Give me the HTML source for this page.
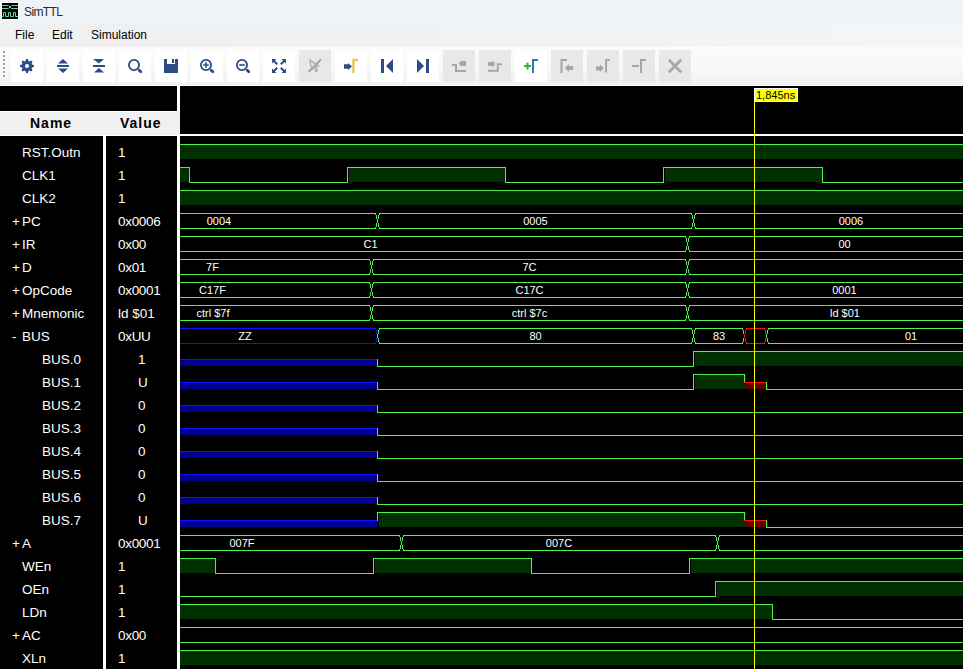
<!DOCTYPE html>
<html><head><meta charset="utf-8"><style>
*{margin:0;padding:0;box-sizing:border-box}
html,body{width:963px;height:669px;overflow:hidden;background:#000;font-family:"Liberation Sans",sans-serif}
.abs{position:absolute}
#title{position:absolute;left:0;top:0;width:963px;height:23px;background:#eef3f8}
#menu{position:absolute;left:0;top:23px;width:963px;height:24px;background:linear-gradient(to right,#f0f0f0 0%,#f0f0f0 20%,#f5f5f5 100%)}
#menu span{position:absolute;top:5px;font-size:12px;color:#000;line-height:14px}
#tool{position:absolute;left:0;top:47px;width:963px;height:39px;border-bottom:1px solid #fff;background:linear-gradient(to bottom,#fbfbfb 0%,#f8f8f8 55%,#f0f0f0 100%)}
.btn{position:absolute;top:50px;width:32px;height:32px}
.btn svg{display:block}
#left{position:absolute;left:0;top:86px;width:177px;height:583px;background:#000}
#hdr{position:absolute;left:0;top:111px;width:180px;height:25px;background:#f0f0f0;border-top:1px solid #fff;border-bottom:1px solid #fff}
.hd{position:absolute;top:0;font-size:14px;font-weight:bold;color:#000;line-height:23px;letter-spacing:1px}
.t{position:absolute;font-size:13.5px;color:#fff;line-height:23px;white-space:pre}
#wave{position:absolute;left:0;top:0}
#wave text{font-family:"Liberation Sans",sans-serif;font-size:11px;fill:#fff}
</style></head><body>
<div id="title">
<svg class="abs" style="left:1px;top:2px" width="18" height="18" viewBox="0 0 18 18">
<rect x="0" y="0" width="18" height="18" fill="#fff"/>
<rect x="1" y="1" width="16" height="16" fill="#000"/>
<path d="M1 3.5H7.5L9 5L10.5 3.5H17M1 6.5H7.5L9 5L10.5 6.5H17" stroke="#5fd69c" stroke-width="1" fill="none"/>
<path d="M1 14.5H2.5V10.5H4.5V14.5H7.5V10.5H9.5V14.5H12.5V10.5H14.5V14.5H17" stroke="#5fd69c" stroke-width="1" fill="none"/>
</svg>
<div class="abs" style="left:24px;top:5px;font-size:12px;line-height:14px;color:#2b2b2b;letter-spacing:-0.6px">SimTTL</div>
</div>
<div id="menu"><span style="left:15px">File</span><span style="left:52px">Edit</span><span style="left:91px">Simulation</span></div>
<div id="tool">
</div>
<div style="position:absolute;left:4px;top:52px;width:2px;height:2px;background:#ffffff"></div><div style="position:absolute;left:3px;top:51px;width:2px;height:2px;background:#a0a0a0"></div><div style="position:absolute;left:4px;top:56px;width:2px;height:2px;background:#ffffff"></div><div style="position:absolute;left:3px;top:55px;width:2px;height:2px;background:#a0a0a0"></div><div style="position:absolute;left:4px;top:60px;width:2px;height:2px;background:#ffffff"></div><div style="position:absolute;left:3px;top:59px;width:2px;height:2px;background:#a0a0a0"></div><div style="position:absolute;left:4px;top:64px;width:2px;height:2px;background:#ffffff"></div><div style="position:absolute;left:3px;top:63px;width:2px;height:2px;background:#a0a0a0"></div><div style="position:absolute;left:4px;top:68px;width:2px;height:2px;background:#ffffff"></div><div style="position:absolute;left:3px;top:67px;width:2px;height:2px;background:#a0a0a0"></div><div style="position:absolute;left:4px;top:72px;width:2px;height:2px;background:#ffffff"></div><div style="position:absolute;left:3px;top:71px;width:2px;height:2px;background:#a0a0a0"></div><div style="position:absolute;left:4px;top:76px;width:2px;height:2px;background:#ffffff"></div><div style="position:absolute;left:3px;top:75px;width:2px;height:2px;background:#a0a0a0"></div>
<div class="btn" style="left:11px;background:#ffffff"><svg width="32" height="32" viewBox="0 0 32 32"><path d="M20.96 14.45L22.94 15.10L22.94 16.90L20.96 17.55L20.61 18.42L21.55 20.27L20.27 21.55L18.42 20.61L17.55 20.96L16.90 22.94L15.10 22.94L14.45 20.96L13.58 20.61L11.73 21.55L10.45 20.27L11.39 18.42L11.04 17.55L9.06 16.90L9.06 15.10L11.04 14.45L11.39 13.58L10.45 11.73L11.73 10.45L13.58 11.39L14.45 11.04L15.10 9.06L16.90 9.06L17.55 11.04L18.42 11.39L20.27 10.45L21.55 11.73L20.61 13.58ZM18.1 16A2.1 2.1 0 1 0 13.9 16A2.1 2.1 0 1 0 18.1 16Z" fill="#2c4b87" fill-rule="evenodd"/></svg></div><div class="btn" style="left:47px;background:#ffffff"><svg width="32" height="32" viewBox="0 0 32 32"><path d="M11 13.5L16 9L21 13.5Z M11 18.5L21 18.5L16 23Z" fill="#2c4b87"/><rect x="10" y="15" width="12" height="2" fill="#2c4b87"/></svg></div><div class="btn" style="left:83px;background:#ffffff"><svg width="32" height="32" viewBox="0 0 32 32"><path d="M10 9L21 9L16 13.5Z M11 22.5L16 18L21 22.5Z" fill="#2c4b87"/><rect x="10" y="15" width="12" height="2" fill="#2c4b87"/></svg></div><div class="btn" style="left:119px;background:#ffffff"><svg width="32" height="32" viewBox="0 0 32 32"><circle cx="15" cy="15" r="5.1" stroke="#2c4b87" stroke-width="1.8" fill="none"/><path d="M20.2 20.2L21.8 21.8" stroke="#2c4b87" stroke-width="2.8" stroke-linecap="round"/></svg></div><div class="btn" style="left:155px;background:#ffffff"><svg width="32" height="32" viewBox="0 0 32 32"><path d="M9 9H12V14H20V9H23V23H9Z" fill="#2c4b87"/><rect x="17" y="9" width="2" height="4" fill="#2c4b87"/></svg></div><div class="btn" style="left:191px;background:#ffffff"><svg width="32" height="32" viewBox="0 0 32 32"><circle cx="15" cy="15" r="5.1" stroke="#2c4b87" stroke-width="1.8" fill="none"/><path d="M20.2 20.2L21.8 21.8" stroke="#2c4b87" stroke-width="2.8" stroke-linecap="round"/><path d="M12.2 15H17.8M15 12.2V17.8" stroke="#2c4b87" stroke-width="1.6"/></svg></div><div class="btn" style="left:227px;background:#ffffff"><svg width="32" height="32" viewBox="0 0 32 32"><circle cx="15" cy="15" r="5.1" stroke="#2c4b87" stroke-width="1.8" fill="none"/><path d="M20.2 20.2L21.8 21.8" stroke="#2c4b87" stroke-width="2.8" stroke-linecap="round"/><path d="M12.2 15H17.8" stroke="#2c4b87" stroke-width="1.6"/></svg></div><div class="btn" style="left:263px;background:#ffffff"><svg width="32" height="32" viewBox="0 0 32 32"><path d="M9 9H13.5L9 13.5Z M23 9H18.5L23 13.5Z M9 23H13.5L9 18.5Z M23 23H18.5L23 18.5Z" fill="#2c4b87"/><path d="M10.5 10.5L14.2 14.2M21.5 10.5L17.8 14.2M10.5 21.5L14.2 17.8M21.5 21.5L17.8 17.8" stroke="#2c4b87" stroke-width="2"/></svg></div><div class="btn" style="left:299px;background:#e8e8e8"><svg width="32" height="32" viewBox="0 0 32 32"><path d="M11 10L19.5 16L16.5 16.5L18.5 20.5L17 21.5L15 17.5L12.5 19.5Z" stroke="#a6a6a6" stroke-width="1.2" fill="none"/><path d="M9.5 22L22 9.5" stroke="#a6a6a6" stroke-width="2.2"/></svg></div><div class="btn" style="left:335px;background:#ffffff"><svg width="32" height="32" viewBox="0 0 32 32"><path d="M9 14.2H13V13L17 16.5L13 20V18.8H9Z" fill="#2c4b87"/><path d="M18.4 23V10H23" stroke="#e2c95e" stroke-width="2.4" fill="none"/></svg></div><div class="btn" style="left:371px;background:#ffffff"><svg width="32" height="32" viewBox="0 0 32 32"><rect x="10" y="9" width="3" height="14" fill="#2c4b87"/><path d="M22 9V23L15 16Z" fill="#2c4b87"/></svg></div><div class="btn" style="left:407px;background:#ffffff"><svg width="32" height="32" viewBox="0 0 32 32"><rect x="19" y="9" width="3" height="14" fill="#2c4b87"/><path d="M10 9V23L17 16Z" fill="#2c4b87"/></svg></div><div class="btn" style="left:443px;background:#e8e8e8"><svg width="32" height="32" viewBox="0 0 32 32"><path d="M9 15H13V21H23" stroke="#a6a6a6" stroke-width="2" fill="none"/><path d="M23 11H19V10L15.5 13.5L19 17V16H23Z" fill="#a6a6a6"/></svg></div><div class="btn" style="left:479px;background:#e8e8e8"><svg width="32" height="32" viewBox="0 0 32 32"><path d="M9 20.8H18.8V14.2H23" stroke="#a6a6a6" stroke-width="2" fill="none"/><path d="M9 12H13V10.2L16.5 14L13 17.8V16H9Z" fill="#a6a6a6"/></svg></div><div class="btn" style="left:515px;background:#ffffff"><svg width="32" height="32" viewBox="0 0 32 32"><path d="M9 16H16M12.5 12.5V19.5" stroke="#3aae3a" stroke-width="2"/><path d="M18 23V10H23" stroke="#3374b6" stroke-width="2" fill="none"/></svg></div><div class="btn" style="left:551px;background:#e8e8e8"><svg width="32" height="32" viewBox="0 0 32 32"><path d="M10.5 23V10H16" stroke="#a6a6a6" stroke-width="2" fill="none"/><path d="M22.2 16H18V14L14 18L18 22V20H22.2Z" fill="#a6a6a6"/></svg></div><div class="btn" style="left:587px;background:#e8e8e8"><svg width="32" height="32" viewBox="0 0 32 32"><path d="M19 22.5V10H23" stroke="#a6a6a6" stroke-width="2" fill="none"/><path d="M9 16.2H13V14.5L16.8 18.3L13 22V20.6H9Z" fill="#a6a6a6"/></svg></div><div class="btn" style="left:623px;background:#e8e8e8"><svg width="32" height="32" viewBox="0 0 32 32"><path d="M18 23V10H23" stroke="#a6a6a6" stroke-width="2" fill="none"/><path d="M9 16H16" stroke="#a6a6a6" stroke-width="2"/></svg></div><div class="btn" style="left:659px;background:#e8e8e8"><svg width="32" height="32" viewBox="0 0 32 32"><path d="M9.8 9.8L22.2 22.2M22.2 9.8L9.8 22.2" stroke="#a6a6a6" stroke-width="2.8"/></svg></div>
<div id="left"></div>
<div class="abs" style="left:177px;top:86px;width:3px;height:583px;background:#fff"></div>
<div id="hdr"><div class="hd" style="left:30px">Name</div><div class="hd" style="left:120px">Value</div></div>
<div class="abs" style="left:103px;top:136px;width:3px;height:533px;background:#fff"></div>
<div class="t" style="left:22px;top:141px">RST.Outn</div><div class="t" style="left:118px;top:141px">1</div><div class="t" style="left:22px;top:164px">CLK1</div><div class="t" style="left:118px;top:164px">1</div><div class="t" style="left:22px;top:187px">CLK2</div><div class="t" style="left:118px;top:187px">1</div><div class="t" style="left:12px;top:210px">+</div><div class="t" style="left:22px;top:210px">PC</div><div class="t" style="left:118px;top:210px;letter-spacing:-0.3px">0x0006</div><div class="t" style="left:12px;top:233px">+</div><div class="t" style="left:22px;top:233px">IR</div><div class="t" style="left:118px;top:233px;letter-spacing:-0.3px">0x00</div><div class="t" style="left:12px;top:256px">+</div><div class="t" style="left:22px;top:256px">D</div><div class="t" style="left:118px;top:256px;letter-spacing:-0.3px">0x01</div><div class="t" style="left:12px;top:279px">+</div><div class="t" style="left:22px;top:279px">OpCode</div><div class="t" style="left:118px;top:279px;letter-spacing:-0.3px">0x0001</div><div class="t" style="left:12px;top:302px">+</div><div class="t" style="left:22px;top:302px">Mnemonic</div><div class="t" style="left:118px;top:302px">ld $01</div><div class="t" style="left:12px;top:325px">-</div><div class="t" style="left:22px;top:325px">BUS</div><div class="t" style="left:118px;top:325px;letter-spacing:-0.3px">0xUU</div><div class="t" style="left:42px;top:348px">BUS.0</div><div class="t" style="left:138px;top:348px">1</div><div class="t" style="left:42px;top:371px">BUS.1</div><div class="t" style="left:138px;top:371px">U</div><div class="t" style="left:42px;top:394px">BUS.2</div><div class="t" style="left:138px;top:394px">0</div><div class="t" style="left:42px;top:417px">BUS.3</div><div class="t" style="left:138px;top:417px">0</div><div class="t" style="left:42px;top:440px">BUS.4</div><div class="t" style="left:138px;top:440px">0</div><div class="t" style="left:42px;top:463px">BUS.5</div><div class="t" style="left:138px;top:463px">0</div><div class="t" style="left:42px;top:486px">BUS.6</div><div class="t" style="left:138px;top:486px">0</div><div class="t" style="left:42px;top:509px">BUS.7</div><div class="t" style="left:138px;top:509px">U</div><div class="t" style="left:12px;top:532px">+</div><div class="t" style="left:22px;top:532px">A</div><div class="t" style="left:118px;top:532px;letter-spacing:-0.3px">0x0001</div><div class="t" style="left:22px;top:555px">WEn</div><div class="t" style="left:118px;top:555px">1</div><div class="t" style="left:22px;top:578px">OEn</div><div class="t" style="left:118px;top:578px">1</div><div class="t" style="left:22px;top:601px">LDn</div><div class="t" style="left:118px;top:601px">1</div><div class="t" style="left:12px;top:624px">+</div><div class="t" style="left:22px;top:624px">AC</div><div class="t" style="left:118px;top:624px;letter-spacing:-0.3px">0x00</div><div class="t" style="left:22px;top:647px">XLn</div><div class="t" style="left:118px;top:647px">1</div>
<svg id="wave" width="963" height="669" viewBox="0 0 963 669" style="position:absolute;left:0;top:0">
<defs><clipPath id="cp"><rect x="180" y="86" width="783" height="583"/></clipPath></defs>
<g clip-path="url(#cp)" shape-rendering="crispEdges">
<rect x="180" y="134" width="783" height="2" fill="#fff"/>
<rect x="180" y="145" width="784" height="14" fill="#003000"/><rect x="180" y="144" width="784" height="1" fill="#50f050"/><rect x="180" y="168" width="9" height="14" fill="#003000"/><rect x="349" y="168" width="156" height="14" fill="#003000"/><rect x="665" y="168" width="157" height="14" fill="#003000"/><rect x="180" y="167" width="10" height="1" fill="#50f050"/><rect x="189" y="167" width="1" height="16" fill="#50f050"/><rect x="189" y="182" width="159" height="1" fill="#50f050"/><rect x="347" y="167" width="1" height="16" fill="#50f050"/><rect x="347" y="167" width="159" height="1" fill="#50f050"/><rect x="505" y="167" width="1" height="16" fill="#50f050"/><rect x="505" y="182" width="159" height="1" fill="#50f050"/><rect x="663" y="167" width="1" height="16" fill="#50f050"/><rect x="663" y="167" width="160" height="1" fill="#50f050"/><rect x="822" y="167" width="1" height="16" fill="#50f050"/><rect x="822" y="182" width="142" height="1" fill="#50f050"/><rect x="180" y="191" width="784" height="14" fill="#003000"/><rect x="180" y="190" width="784" height="1" fill="#50f050"/><rect x="180" y="213" width="196" height="1" fill="#50f050"/><rect x="180" y="228" width="196" height="1" fill="#50f050"/><rect x="375" y="213" width="1" height="1" fill="#50f050"/><rect x="375" y="214" width="1" height="1" fill="#50f050"/><rect x="376" y="215" width="1" height="1" fill="#50f050"/><rect x="376" y="216" width="1" height="1" fill="#50f050"/><rect x="376" y="217" width="1" height="1" fill="#50f050"/><rect x="376" y="218" width="1" height="1" fill="#50f050"/><rect x="377" y="219" width="1" height="1" fill="#50f050"/><rect x="377" y="220" width="1" height="1" fill="#50f050"/><rect x="377" y="221" width="1" height="1" fill="#50f050"/><rect x="377" y="222" width="1" height="1" fill="#50f050"/><rect x="376" y="223" width="1" height="1" fill="#50f050"/><rect x="376" y="224" width="1" height="1" fill="#50f050"/><rect x="376" y="225" width="1" height="1" fill="#50f050"/><rect x="376" y="226" width="1" height="1" fill="#50f050"/><rect x="375" y="227" width="1" height="1" fill="#50f050"/><rect x="375" y="228" width="1" height="1" fill="#50f050"/><rect x="379" y="213" width="313" height="1" fill="#50f050"/><rect x="379" y="228" width="313" height="1" fill="#50f050"/><rect x="691" y="213" width="1" height="1" fill="#50f050"/><rect x="691" y="214" width="1" height="1" fill="#50f050"/><rect x="692" y="215" width="1" height="1" fill="#50f050"/><rect x="692" y="216" width="1" height="1" fill="#50f050"/><rect x="692" y="217" width="1" height="1" fill="#50f050"/><rect x="692" y="218" width="1" height="1" fill="#50f050"/><rect x="693" y="219" width="1" height="1" fill="#50f050"/><rect x="693" y="220" width="1" height="1" fill="#50f050"/><rect x="693" y="221" width="1" height="1" fill="#50f050"/><rect x="693" y="222" width="1" height="1" fill="#50f050"/><rect x="692" y="223" width="1" height="1" fill="#50f050"/><rect x="692" y="224" width="1" height="1" fill="#50f050"/><rect x="692" y="225" width="1" height="1" fill="#50f050"/><rect x="692" y="226" width="1" height="1" fill="#50f050"/><rect x="691" y="227" width="1" height="1" fill="#50f050"/><rect x="691" y="228" width="1" height="1" fill="#50f050"/><rect x="379" y="213" width="1" height="1" fill="#50f050"/><rect x="379" y="214" width="1" height="1" fill="#50f050"/><rect x="378" y="215" width="1" height="1" fill="#50f050"/><rect x="378" y="216" width="1" height="1" fill="#50f050"/><rect x="378" y="217" width="1" height="1" fill="#50f050"/><rect x="378" y="218" width="1" height="1" fill="#50f050"/><rect x="377" y="219" width="1" height="1" fill="#50f050"/><rect x="377" y="220" width="1" height="1" fill="#50f050"/><rect x="377" y="221" width="1" height="1" fill="#50f050"/><rect x="377" y="222" width="1" height="1" fill="#50f050"/><rect x="378" y="223" width="1" height="1" fill="#50f050"/><rect x="378" y="224" width="1" height="1" fill="#50f050"/><rect x="378" y="225" width="1" height="1" fill="#50f050"/><rect x="378" y="226" width="1" height="1" fill="#50f050"/><rect x="379" y="227" width="1" height="1" fill="#50f050"/><rect x="379" y="228" width="1" height="1" fill="#50f050"/><rect x="695" y="213" width="269" height="1" fill="#50f050"/><rect x="695" y="228" width="269" height="1" fill="#50f050"/><rect x="695" y="213" width="1" height="1" fill="#50f050"/><rect x="695" y="214" width="1" height="1" fill="#50f050"/><rect x="694" y="215" width="1" height="1" fill="#50f050"/><rect x="694" y="216" width="1" height="1" fill="#50f050"/><rect x="694" y="217" width="1" height="1" fill="#50f050"/><rect x="694" y="218" width="1" height="1" fill="#50f050"/><rect x="693" y="219" width="1" height="1" fill="#50f050"/><rect x="693" y="220" width="1" height="1" fill="#50f050"/><rect x="693" y="221" width="1" height="1" fill="#50f050"/><rect x="693" y="222" width="1" height="1" fill="#50f050"/><rect x="694" y="223" width="1" height="1" fill="#50f050"/><rect x="694" y="224" width="1" height="1" fill="#50f050"/><rect x="694" y="225" width="1" height="1" fill="#50f050"/><rect x="694" y="226" width="1" height="1" fill="#50f050"/><rect x="695" y="227" width="1" height="1" fill="#50f050"/><rect x="695" y="228" width="1" height="1" fill="#50f050"/><rect x="180" y="236" width="506" height="1" fill="#50f050"/><rect x="180" y="251" width="506" height="1" fill="#50f050"/><rect x="685" y="236" width="1" height="1" fill="#50f050"/><rect x="685" y="237" width="1" height="1" fill="#50f050"/><rect x="686" y="238" width="1" height="1" fill="#50f050"/><rect x="686" y="239" width="1" height="1" fill="#50f050"/><rect x="686" y="240" width="1" height="1" fill="#50f050"/><rect x="686" y="241" width="1" height="1" fill="#50f050"/><rect x="687" y="242" width="1" height="1" fill="#50f050"/><rect x="687" y="243" width="1" height="1" fill="#50f050"/><rect x="687" y="244" width="1" height="1" fill="#50f050"/><rect x="687" y="245" width="1" height="1" fill="#50f050"/><rect x="686" y="246" width="1" height="1" fill="#50f050"/><rect x="686" y="247" width="1" height="1" fill="#50f050"/><rect x="686" y="248" width="1" height="1" fill="#50f050"/><rect x="686" y="249" width="1" height="1" fill="#50f050"/><rect x="685" y="250" width="1" height="1" fill="#50f050"/><rect x="685" y="251" width="1" height="1" fill="#50f050"/><rect x="689" y="236" width="275" height="1" fill="#50f050"/><rect x="689" y="251" width="275" height="1" fill="#50f050"/><rect x="689" y="236" width="1" height="1" fill="#50f050"/><rect x="689" y="237" width="1" height="1" fill="#50f050"/><rect x="688" y="238" width="1" height="1" fill="#50f050"/><rect x="688" y="239" width="1" height="1" fill="#50f050"/><rect x="688" y="240" width="1" height="1" fill="#50f050"/><rect x="688" y="241" width="1" height="1" fill="#50f050"/><rect x="687" y="242" width="1" height="1" fill="#50f050"/><rect x="687" y="243" width="1" height="1" fill="#50f050"/><rect x="687" y="244" width="1" height="1" fill="#50f050"/><rect x="687" y="245" width="1" height="1" fill="#50f050"/><rect x="688" y="246" width="1" height="1" fill="#50f050"/><rect x="688" y="247" width="1" height="1" fill="#50f050"/><rect x="688" y="248" width="1" height="1" fill="#50f050"/><rect x="688" y="249" width="1" height="1" fill="#50f050"/><rect x="689" y="250" width="1" height="1" fill="#50f050"/><rect x="689" y="251" width="1" height="1" fill="#50f050"/><rect x="180" y="259" width="190" height="1" fill="#50f050"/><rect x="180" y="274" width="190" height="1" fill="#50f050"/><rect x="369" y="259" width="1" height="1" fill="#50f050"/><rect x="369" y="260" width="1" height="1" fill="#50f050"/><rect x="370" y="261" width="1" height="1" fill="#50f050"/><rect x="370" y="262" width="1" height="1" fill="#50f050"/><rect x="370" y="263" width="1" height="1" fill="#50f050"/><rect x="370" y="264" width="1" height="1" fill="#50f050"/><rect x="371" y="265" width="1" height="1" fill="#50f050"/><rect x="371" y="266" width="1" height="1" fill="#50f050"/><rect x="371" y="267" width="1" height="1" fill="#50f050"/><rect x="371" y="268" width="1" height="1" fill="#50f050"/><rect x="370" y="269" width="1" height="1" fill="#50f050"/><rect x="370" y="270" width="1" height="1" fill="#50f050"/><rect x="370" y="271" width="1" height="1" fill="#50f050"/><rect x="370" y="272" width="1" height="1" fill="#50f050"/><rect x="369" y="273" width="1" height="1" fill="#50f050"/><rect x="369" y="274" width="1" height="1" fill="#50f050"/><rect x="373" y="259" width="313" height="1" fill="#50f050"/><rect x="373" y="274" width="313" height="1" fill="#50f050"/><rect x="685" y="259" width="1" height="1" fill="#50f050"/><rect x="685" y="260" width="1" height="1" fill="#50f050"/><rect x="686" y="261" width="1" height="1" fill="#50f050"/><rect x="686" y="262" width="1" height="1" fill="#50f050"/><rect x="686" y="263" width="1" height="1" fill="#50f050"/><rect x="686" y="264" width="1" height="1" fill="#50f050"/><rect x="687" y="265" width="1" height="1" fill="#50f050"/><rect x="687" y="266" width="1" height="1" fill="#50f050"/><rect x="687" y="267" width="1" height="1" fill="#50f050"/><rect x="687" y="268" width="1" height="1" fill="#50f050"/><rect x="686" y="269" width="1" height="1" fill="#50f050"/><rect x="686" y="270" width="1" height="1" fill="#50f050"/><rect x="686" y="271" width="1" height="1" fill="#50f050"/><rect x="686" y="272" width="1" height="1" fill="#50f050"/><rect x="685" y="273" width="1" height="1" fill="#50f050"/><rect x="685" y="274" width="1" height="1" fill="#50f050"/><rect x="373" y="259" width="1" height="1" fill="#50f050"/><rect x="373" y="260" width="1" height="1" fill="#50f050"/><rect x="372" y="261" width="1" height="1" fill="#50f050"/><rect x="372" y="262" width="1" height="1" fill="#50f050"/><rect x="372" y="263" width="1" height="1" fill="#50f050"/><rect x="372" y="264" width="1" height="1" fill="#50f050"/><rect x="371" y="265" width="1" height="1" fill="#50f050"/><rect x="371" y="266" width="1" height="1" fill="#50f050"/><rect x="371" y="267" width="1" height="1" fill="#50f050"/><rect x="371" y="268" width="1" height="1" fill="#50f050"/><rect x="372" y="269" width="1" height="1" fill="#50f050"/><rect x="372" y="270" width="1" height="1" fill="#50f050"/><rect x="372" y="271" width="1" height="1" fill="#50f050"/><rect x="372" y="272" width="1" height="1" fill="#50f050"/><rect x="373" y="273" width="1" height="1" fill="#50f050"/><rect x="373" y="274" width="1" height="1" fill="#50f050"/><rect x="689" y="259" width="275" height="1" fill="#50f050"/><rect x="689" y="274" width="275" height="1" fill="#50f050"/><rect x="689" y="259" width="1" height="1" fill="#50f050"/><rect x="689" y="260" width="1" height="1" fill="#50f050"/><rect x="688" y="261" width="1" height="1" fill="#50f050"/><rect x="688" y="262" width="1" height="1" fill="#50f050"/><rect x="688" y="263" width="1" height="1" fill="#50f050"/><rect x="688" y="264" width="1" height="1" fill="#50f050"/><rect x="687" y="265" width="1" height="1" fill="#50f050"/><rect x="687" y="266" width="1" height="1" fill="#50f050"/><rect x="687" y="267" width="1" height="1" fill="#50f050"/><rect x="687" y="268" width="1" height="1" fill="#50f050"/><rect x="688" y="269" width="1" height="1" fill="#50f050"/><rect x="688" y="270" width="1" height="1" fill="#50f050"/><rect x="688" y="271" width="1" height="1" fill="#50f050"/><rect x="688" y="272" width="1" height="1" fill="#50f050"/><rect x="689" y="273" width="1" height="1" fill="#50f050"/><rect x="689" y="274" width="1" height="1" fill="#50f050"/><rect x="180" y="282" width="190" height="1" fill="#50f050"/><rect x="180" y="297" width="190" height="1" fill="#50f050"/><rect x="369" y="282" width="1" height="1" fill="#50f050"/><rect x="369" y="283" width="1" height="1" fill="#50f050"/><rect x="370" y="284" width="1" height="1" fill="#50f050"/><rect x="370" y="285" width="1" height="1" fill="#50f050"/><rect x="370" y="286" width="1" height="1" fill="#50f050"/><rect x="370" y="287" width="1" height="1" fill="#50f050"/><rect x="371" y="288" width="1" height="1" fill="#50f050"/><rect x="371" y="289" width="1" height="1" fill="#50f050"/><rect x="371" y="290" width="1" height="1" fill="#50f050"/><rect x="371" y="291" width="1" height="1" fill="#50f050"/><rect x="370" y="292" width="1" height="1" fill="#50f050"/><rect x="370" y="293" width="1" height="1" fill="#50f050"/><rect x="370" y="294" width="1" height="1" fill="#50f050"/><rect x="370" y="295" width="1" height="1" fill="#50f050"/><rect x="369" y="296" width="1" height="1" fill="#50f050"/><rect x="369" y="297" width="1" height="1" fill="#50f050"/><rect x="373" y="282" width="313" height="1" fill="#50f050"/><rect x="373" y="297" width="313" height="1" fill="#50f050"/><rect x="685" y="282" width="1" height="1" fill="#50f050"/><rect x="685" y="283" width="1" height="1" fill="#50f050"/><rect x="686" y="284" width="1" height="1" fill="#50f050"/><rect x="686" y="285" width="1" height="1" fill="#50f050"/><rect x="686" y="286" width="1" height="1" fill="#50f050"/><rect x="686" y="287" width="1" height="1" fill="#50f050"/><rect x="687" y="288" width="1" height="1" fill="#50f050"/><rect x="687" y="289" width="1" height="1" fill="#50f050"/><rect x="687" y="290" width="1" height="1" fill="#50f050"/><rect x="687" y="291" width="1" height="1" fill="#50f050"/><rect x="686" y="292" width="1" height="1" fill="#50f050"/><rect x="686" y="293" width="1" height="1" fill="#50f050"/><rect x="686" y="294" width="1" height="1" fill="#50f050"/><rect x="686" y="295" width="1" height="1" fill="#50f050"/><rect x="685" y="296" width="1" height="1" fill="#50f050"/><rect x="685" y="297" width="1" height="1" fill="#50f050"/><rect x="373" y="282" width="1" height="1" fill="#50f050"/><rect x="373" y="283" width="1" height="1" fill="#50f050"/><rect x="372" y="284" width="1" height="1" fill="#50f050"/><rect x="372" y="285" width="1" height="1" fill="#50f050"/><rect x="372" y="286" width="1" height="1" fill="#50f050"/><rect x="372" y="287" width="1" height="1" fill="#50f050"/><rect x="371" y="288" width="1" height="1" fill="#50f050"/><rect x="371" y="289" width="1" height="1" fill="#50f050"/><rect x="371" y="290" width="1" height="1" fill="#50f050"/><rect x="371" y="291" width="1" height="1" fill="#50f050"/><rect x="372" y="292" width="1" height="1" fill="#50f050"/><rect x="372" y="293" width="1" height="1" fill="#50f050"/><rect x="372" y="294" width="1" height="1" fill="#50f050"/><rect x="372" y="295" width="1" height="1" fill="#50f050"/><rect x="373" y="296" width="1" height="1" fill="#50f050"/><rect x="373" y="297" width="1" height="1" fill="#50f050"/><rect x="689" y="282" width="275" height="1" fill="#50f050"/><rect x="689" y="297" width="275" height="1" fill="#50f050"/><rect x="689" y="282" width="1" height="1" fill="#50f050"/><rect x="689" y="283" width="1" height="1" fill="#50f050"/><rect x="688" y="284" width="1" height="1" fill="#50f050"/><rect x="688" y="285" width="1" height="1" fill="#50f050"/><rect x="688" y="286" width="1" height="1" fill="#50f050"/><rect x="688" y="287" width="1" height="1" fill="#50f050"/><rect x="687" y="288" width="1" height="1" fill="#50f050"/><rect x="687" y="289" width="1" height="1" fill="#50f050"/><rect x="687" y="290" width="1" height="1" fill="#50f050"/><rect x="687" y="291" width="1" height="1" fill="#50f050"/><rect x="688" y="292" width="1" height="1" fill="#50f050"/><rect x="688" y="293" width="1" height="1" fill="#50f050"/><rect x="688" y="294" width="1" height="1" fill="#50f050"/><rect x="688" y="295" width="1" height="1" fill="#50f050"/><rect x="689" y="296" width="1" height="1" fill="#50f050"/><rect x="689" y="297" width="1" height="1" fill="#50f050"/><rect x="180" y="305" width="190" height="1" fill="#50f050"/><rect x="180" y="320" width="190" height="1" fill="#50f050"/><rect x="369" y="305" width="1" height="1" fill="#50f050"/><rect x="369" y="306" width="1" height="1" fill="#50f050"/><rect x="370" y="307" width="1" height="1" fill="#50f050"/><rect x="370" y="308" width="1" height="1" fill="#50f050"/><rect x="370" y="309" width="1" height="1" fill="#50f050"/><rect x="370" y="310" width="1" height="1" fill="#50f050"/><rect x="371" y="311" width="1" height="1" fill="#50f050"/><rect x="371" y="312" width="1" height="1" fill="#50f050"/><rect x="371" y="313" width="1" height="1" fill="#50f050"/><rect x="371" y="314" width="1" height="1" fill="#50f050"/><rect x="370" y="315" width="1" height="1" fill="#50f050"/><rect x="370" y="316" width="1" height="1" fill="#50f050"/><rect x="370" y="317" width="1" height="1" fill="#50f050"/><rect x="370" y="318" width="1" height="1" fill="#50f050"/><rect x="369" y="319" width="1" height="1" fill="#50f050"/><rect x="369" y="320" width="1" height="1" fill="#50f050"/><rect x="373" y="305" width="313" height="1" fill="#50f050"/><rect x="373" y="320" width="313" height="1" fill="#50f050"/><rect x="685" y="305" width="1" height="1" fill="#50f050"/><rect x="685" y="306" width="1" height="1" fill="#50f050"/><rect x="686" y="307" width="1" height="1" fill="#50f050"/><rect x="686" y="308" width="1" height="1" fill="#50f050"/><rect x="686" y="309" width="1" height="1" fill="#50f050"/><rect x="686" y="310" width="1" height="1" fill="#50f050"/><rect x="687" y="311" width="1" height="1" fill="#50f050"/><rect x="687" y="312" width="1" height="1" fill="#50f050"/><rect x="687" y="313" width="1" height="1" fill="#50f050"/><rect x="687" y="314" width="1" height="1" fill="#50f050"/><rect x="686" y="315" width="1" height="1" fill="#50f050"/><rect x="686" y="316" width="1" height="1" fill="#50f050"/><rect x="686" y="317" width="1" height="1" fill="#50f050"/><rect x="686" y="318" width="1" height="1" fill="#50f050"/><rect x="685" y="319" width="1" height="1" fill="#50f050"/><rect x="685" y="320" width="1" height="1" fill="#50f050"/><rect x="373" y="305" width="1" height="1" fill="#50f050"/><rect x="373" y="306" width="1" height="1" fill="#50f050"/><rect x="372" y="307" width="1" height="1" fill="#50f050"/><rect x="372" y="308" width="1" height="1" fill="#50f050"/><rect x="372" y="309" width="1" height="1" fill="#50f050"/><rect x="372" y="310" width="1" height="1" fill="#50f050"/><rect x="371" y="311" width="1" height="1" fill="#50f050"/><rect x="371" y="312" width="1" height="1" fill="#50f050"/><rect x="371" y="313" width="1" height="1" fill="#50f050"/><rect x="371" y="314" width="1" height="1" fill="#50f050"/><rect x="372" y="315" width="1" height="1" fill="#50f050"/><rect x="372" y="316" width="1" height="1" fill="#50f050"/><rect x="372" y="317" width="1" height="1" fill="#50f050"/><rect x="372" y="318" width="1" height="1" fill="#50f050"/><rect x="373" y="319" width="1" height="1" fill="#50f050"/><rect x="373" y="320" width="1" height="1" fill="#50f050"/><rect x="689" y="305" width="275" height="1" fill="#50f050"/><rect x="689" y="320" width="275" height="1" fill="#50f050"/><rect x="689" y="305" width="1" height="1" fill="#50f050"/><rect x="689" y="306" width="1" height="1" fill="#50f050"/><rect x="688" y="307" width="1" height="1" fill="#50f050"/><rect x="688" y="308" width="1" height="1" fill="#50f050"/><rect x="688" y="309" width="1" height="1" fill="#50f050"/><rect x="688" y="310" width="1" height="1" fill="#50f050"/><rect x="687" y="311" width="1" height="1" fill="#50f050"/><rect x="687" y="312" width="1" height="1" fill="#50f050"/><rect x="687" y="313" width="1" height="1" fill="#50f050"/><rect x="687" y="314" width="1" height="1" fill="#50f050"/><rect x="688" y="315" width="1" height="1" fill="#50f050"/><rect x="688" y="316" width="1" height="1" fill="#50f050"/><rect x="688" y="317" width="1" height="1" fill="#50f050"/><rect x="688" y="318" width="1" height="1" fill="#50f050"/><rect x="689" y="319" width="1" height="1" fill="#50f050"/><rect x="689" y="320" width="1" height="1" fill="#50f050"/><rect x="180" y="328" width="196" height="1" fill="#1010ff"/><rect x="180" y="343" width="196" height="1" fill="#1010ff"/><rect x="375" y="328" width="1" height="1" fill="#1010ff"/><rect x="375" y="329" width="1" height="1" fill="#1010ff"/><rect x="376" y="330" width="1" height="1" fill="#1010ff"/><rect x="376" y="331" width="1" height="1" fill="#1010ff"/><rect x="376" y="332" width="1" height="1" fill="#1010ff"/><rect x="376" y="333" width="1" height="1" fill="#1010ff"/><rect x="377" y="334" width="1" height="1" fill="#1010ff"/><rect x="377" y="335" width="1" height="1" fill="#1010ff"/><rect x="377" y="336" width="1" height="1" fill="#1010ff"/><rect x="377" y="337" width="1" height="1" fill="#1010ff"/><rect x="376" y="338" width="1" height="1" fill="#1010ff"/><rect x="376" y="339" width="1" height="1" fill="#1010ff"/><rect x="376" y="340" width="1" height="1" fill="#1010ff"/><rect x="376" y="341" width="1" height="1" fill="#1010ff"/><rect x="375" y="342" width="1" height="1" fill="#1010ff"/><rect x="375" y="343" width="1" height="1" fill="#1010ff"/><rect x="379" y="328" width="313" height="1" fill="#50f050"/><rect x="379" y="343" width="313" height="1" fill="#50f050"/><rect x="691" y="328" width="1" height="1" fill="#50f050"/><rect x="691" y="329" width="1" height="1" fill="#50f050"/><rect x="692" y="330" width="1" height="1" fill="#50f050"/><rect x="692" y="331" width="1" height="1" fill="#50f050"/><rect x="692" y="332" width="1" height="1" fill="#50f050"/><rect x="692" y="333" width="1" height="1" fill="#50f050"/><rect x="693" y="334" width="1" height="1" fill="#50f050"/><rect x="693" y="335" width="1" height="1" fill="#50f050"/><rect x="693" y="336" width="1" height="1" fill="#50f050"/><rect x="693" y="337" width="1" height="1" fill="#50f050"/><rect x="692" y="338" width="1" height="1" fill="#50f050"/><rect x="692" y="339" width="1" height="1" fill="#50f050"/><rect x="692" y="340" width="1" height="1" fill="#50f050"/><rect x="692" y="341" width="1" height="1" fill="#50f050"/><rect x="691" y="342" width="1" height="1" fill="#50f050"/><rect x="691" y="343" width="1" height="1" fill="#50f050"/><rect x="379" y="328" width="1" height="1" fill="#50f050"/><rect x="379" y="329" width="1" height="1" fill="#50f050"/><rect x="378" y="330" width="1" height="1" fill="#50f050"/><rect x="378" y="331" width="1" height="1" fill="#50f050"/><rect x="378" y="332" width="1" height="1" fill="#50f050"/><rect x="378" y="333" width="1" height="1" fill="#50f050"/><rect x="377" y="334" width="1" height="1" fill="#50f050"/><rect x="377" y="335" width="1" height="1" fill="#50f050"/><rect x="377" y="336" width="1" height="1" fill="#50f050"/><rect x="377" y="337" width="1" height="1" fill="#50f050"/><rect x="378" y="338" width="1" height="1" fill="#50f050"/><rect x="378" y="339" width="1" height="1" fill="#50f050"/><rect x="378" y="340" width="1" height="1" fill="#50f050"/><rect x="378" y="341" width="1" height="1" fill="#50f050"/><rect x="379" y="342" width="1" height="1" fill="#50f050"/><rect x="379" y="343" width="1" height="1" fill="#50f050"/><rect x="695" y="328" width="48" height="1" fill="#50f050"/><rect x="695" y="343" width="48" height="1" fill="#50f050"/><rect x="742" y="328" width="1" height="1" fill="#50f050"/><rect x="742" y="329" width="1" height="1" fill="#50f050"/><rect x="743" y="330" width="1" height="1" fill="#50f050"/><rect x="743" y="331" width="1" height="1" fill="#50f050"/><rect x="743" y="332" width="1" height="1" fill="#50f050"/><rect x="743" y="333" width="1" height="1" fill="#50f050"/><rect x="744" y="334" width="1" height="1" fill="#50f050"/><rect x="744" y="335" width="1" height="1" fill="#50f050"/><rect x="744" y="336" width="1" height="1" fill="#50f050"/><rect x="744" y="337" width="1" height="1" fill="#50f050"/><rect x="743" y="338" width="1" height="1" fill="#50f050"/><rect x="743" y="339" width="1" height="1" fill="#50f050"/><rect x="743" y="340" width="1" height="1" fill="#50f050"/><rect x="743" y="341" width="1" height="1" fill="#50f050"/><rect x="742" y="342" width="1" height="1" fill="#50f050"/><rect x="742" y="343" width="1" height="1" fill="#50f050"/><rect x="695" y="328" width="1" height="1" fill="#50f050"/><rect x="695" y="329" width="1" height="1" fill="#50f050"/><rect x="694" y="330" width="1" height="1" fill="#50f050"/><rect x="694" y="331" width="1" height="1" fill="#50f050"/><rect x="694" y="332" width="1" height="1" fill="#50f050"/><rect x="694" y="333" width="1" height="1" fill="#50f050"/><rect x="693" y="334" width="1" height="1" fill="#50f050"/><rect x="693" y="335" width="1" height="1" fill="#50f050"/><rect x="693" y="336" width="1" height="1" fill="#50f050"/><rect x="693" y="337" width="1" height="1" fill="#50f050"/><rect x="694" y="338" width="1" height="1" fill="#50f050"/><rect x="694" y="339" width="1" height="1" fill="#50f050"/><rect x="694" y="340" width="1" height="1" fill="#50f050"/><rect x="694" y="341" width="1" height="1" fill="#50f050"/><rect x="695" y="342" width="1" height="1" fill="#50f050"/><rect x="695" y="343" width="1" height="1" fill="#50f050"/><rect x="746" y="328" width="19" height="1" fill="#ff1010"/><rect x="746" y="343" width="19" height="1" fill="#ff1010"/><rect x="764" y="328" width="1" height="1" fill="#ff1010"/><rect x="764" y="329" width="1" height="1" fill="#ff1010"/><rect x="765" y="330" width="1" height="1" fill="#ff1010"/><rect x="765" y="331" width="1" height="1" fill="#ff1010"/><rect x="765" y="332" width="1" height="1" fill="#ff1010"/><rect x="765" y="333" width="1" height="1" fill="#ff1010"/><rect x="766" y="334" width="1" height="1" fill="#ff1010"/><rect x="766" y="335" width="1" height="1" fill="#ff1010"/><rect x="766" y="336" width="1" height="1" fill="#ff1010"/><rect x="766" y="337" width="1" height="1" fill="#ff1010"/><rect x="765" y="338" width="1" height="1" fill="#ff1010"/><rect x="765" y="339" width="1" height="1" fill="#ff1010"/><rect x="765" y="340" width="1" height="1" fill="#ff1010"/><rect x="765" y="341" width="1" height="1" fill="#ff1010"/><rect x="764" y="342" width="1" height="1" fill="#ff1010"/><rect x="764" y="343" width="1" height="1" fill="#ff1010"/><rect x="746" y="328" width="1" height="1" fill="#ff1010"/><rect x="746" y="329" width="1" height="1" fill="#ff1010"/><rect x="745" y="330" width="1" height="1" fill="#ff1010"/><rect x="745" y="331" width="1" height="1" fill="#ff1010"/><rect x="745" y="332" width="1" height="1" fill="#ff1010"/><rect x="745" y="333" width="1" height="1" fill="#ff1010"/><rect x="744" y="334" width="1" height="1" fill="#ff1010"/><rect x="744" y="335" width="1" height="1" fill="#ff1010"/><rect x="744" y="336" width="1" height="1" fill="#ff1010"/><rect x="744" y="337" width="1" height="1" fill="#ff1010"/><rect x="745" y="338" width="1" height="1" fill="#ff1010"/><rect x="745" y="339" width="1" height="1" fill="#ff1010"/><rect x="745" y="340" width="1" height="1" fill="#ff1010"/><rect x="745" y="341" width="1" height="1" fill="#ff1010"/><rect x="746" y="342" width="1" height="1" fill="#ff1010"/><rect x="746" y="343" width="1" height="1" fill="#ff1010"/><rect x="768" y="328" width="196" height="1" fill="#50f050"/><rect x="768" y="343" width="196" height="1" fill="#50f050"/><rect x="768" y="328" width="1" height="1" fill="#50f050"/><rect x="768" y="329" width="1" height="1" fill="#50f050"/><rect x="767" y="330" width="1" height="1" fill="#50f050"/><rect x="767" y="331" width="1" height="1" fill="#50f050"/><rect x="767" y="332" width="1" height="1" fill="#50f050"/><rect x="767" y="333" width="1" height="1" fill="#50f050"/><rect x="766" y="334" width="1" height="1" fill="#50f050"/><rect x="766" y="335" width="1" height="1" fill="#50f050"/><rect x="766" y="336" width="1" height="1" fill="#50f050"/><rect x="766" y="337" width="1" height="1" fill="#50f050"/><rect x="767" y="338" width="1" height="1" fill="#50f050"/><rect x="767" y="339" width="1" height="1" fill="#50f050"/><rect x="767" y="340" width="1" height="1" fill="#50f050"/><rect x="767" y="341" width="1" height="1" fill="#50f050"/><rect x="768" y="342" width="1" height="1" fill="#50f050"/><rect x="768" y="343" width="1" height="1" fill="#50f050"/><rect x="180" y="360" width="197" height="6" fill="#000090"/><rect x="695" y="352" width="269" height="14" fill="#003000"/><rect x="180" y="359" width="198" height="1" fill="#1010ff"/><rect x="377" y="359" width="1" height="8" fill="#50f050"/><rect x="377" y="366" width="317" height="1" fill="#50f050"/><rect x="693" y="351" width="1" height="16" fill="#50f050"/><rect x="693" y="351" width="271" height="1" fill="#50f050"/><rect x="180" y="383" width="197" height="6" fill="#000090"/><rect x="695" y="375" width="51" height="14" fill="#003000"/><rect x="746" y="383" width="22" height="6" fill="#600000"/><rect x="180" y="382" width="198" height="1" fill="#1010ff"/><rect x="377" y="382" width="1" height="8" fill="#50f050"/><rect x="377" y="389" width="317" height="1" fill="#50f050"/><rect x="693" y="374" width="1" height="16" fill="#50f050"/><rect x="693" y="374" width="52" height="1" fill="#50f050"/><rect x="744" y="374" width="1" height="9" fill="#50f050"/><rect x="744" y="382" width="23" height="1" fill="#ff1010"/><rect x="766" y="382" width="1" height="8" fill="#50f050"/><rect x="766" y="389" width="198" height="1" fill="#50f050"/><rect x="180" y="406" width="197" height="6" fill="#000090"/><rect x="180" y="405" width="198" height="1" fill="#1010ff"/><rect x="377" y="405" width="1" height="8" fill="#50f050"/><rect x="377" y="412" width="587" height="1" fill="#50f050"/><rect x="180" y="429" width="197" height="6" fill="#000090"/><rect x="180" y="428" width="198" height="1" fill="#1010ff"/><rect x="377" y="428" width="1" height="8" fill="#50f050"/><rect x="377" y="435" width="587" height="1" fill="#50f050"/><rect x="180" y="452" width="197" height="6" fill="#000090"/><rect x="180" y="451" width="198" height="1" fill="#1010ff"/><rect x="377" y="451" width="1" height="8" fill="#50f050"/><rect x="377" y="458" width="587" height="1" fill="#50f050"/><rect x="180" y="475" width="197" height="6" fill="#000090"/><rect x="180" y="474" width="198" height="1" fill="#1010ff"/><rect x="377" y="474" width="1" height="8" fill="#50f050"/><rect x="377" y="481" width="587" height="1" fill="#50f050"/><rect x="180" y="498" width="197" height="6" fill="#000090"/><rect x="180" y="497" width="198" height="1" fill="#1010ff"/><rect x="377" y="497" width="1" height="8" fill="#50f050"/><rect x="377" y="504" width="587" height="1" fill="#50f050"/><rect x="180" y="521" width="197" height="6" fill="#000090"/><rect x="379" y="513" width="367" height="14" fill="#003000"/><rect x="746" y="521" width="22" height="6" fill="#600000"/><rect x="180" y="520" width="198" height="1" fill="#1010ff"/><rect x="377" y="512" width="1" height="9" fill="#50f050"/><rect x="377" y="512" width="368" height="1" fill="#50f050"/><rect x="744" y="512" width="1" height="9" fill="#50f050"/><rect x="744" y="520" width="23" height="1" fill="#ff1010"/><rect x="766" y="520" width="1" height="8" fill="#50f050"/><rect x="766" y="527" width="198" height="1" fill="#50f050"/><rect x="180" y="535" width="220" height="1" fill="#50f050"/><rect x="180" y="550" width="220" height="1" fill="#50f050"/><rect x="399" y="535" width="1" height="1" fill="#50f050"/><rect x="399" y="536" width="1" height="1" fill="#50f050"/><rect x="400" y="537" width="1" height="1" fill="#50f050"/><rect x="400" y="538" width="1" height="1" fill="#50f050"/><rect x="400" y="539" width="1" height="1" fill="#50f050"/><rect x="400" y="540" width="1" height="1" fill="#50f050"/><rect x="401" y="541" width="1" height="1" fill="#50f050"/><rect x="401" y="542" width="1" height="1" fill="#50f050"/><rect x="401" y="543" width="1" height="1" fill="#50f050"/><rect x="401" y="544" width="1" height="1" fill="#50f050"/><rect x="400" y="545" width="1" height="1" fill="#50f050"/><rect x="400" y="546" width="1" height="1" fill="#50f050"/><rect x="400" y="547" width="1" height="1" fill="#50f050"/><rect x="400" y="548" width="1" height="1" fill="#50f050"/><rect x="399" y="549" width="1" height="1" fill="#50f050"/><rect x="399" y="550" width="1" height="1" fill="#50f050"/><rect x="403" y="535" width="313" height="1" fill="#50f050"/><rect x="403" y="550" width="313" height="1" fill="#50f050"/><rect x="715" y="535" width="1" height="1" fill="#50f050"/><rect x="715" y="536" width="1" height="1" fill="#50f050"/><rect x="716" y="537" width="1" height="1" fill="#50f050"/><rect x="716" y="538" width="1" height="1" fill="#50f050"/><rect x="716" y="539" width="1" height="1" fill="#50f050"/><rect x="716" y="540" width="1" height="1" fill="#50f050"/><rect x="717" y="541" width="1" height="1" fill="#50f050"/><rect x="717" y="542" width="1" height="1" fill="#50f050"/><rect x="717" y="543" width="1" height="1" fill="#50f050"/><rect x="717" y="544" width="1" height="1" fill="#50f050"/><rect x="716" y="545" width="1" height="1" fill="#50f050"/><rect x="716" y="546" width="1" height="1" fill="#50f050"/><rect x="716" y="547" width="1" height="1" fill="#50f050"/><rect x="716" y="548" width="1" height="1" fill="#50f050"/><rect x="715" y="549" width="1" height="1" fill="#50f050"/><rect x="715" y="550" width="1" height="1" fill="#50f050"/><rect x="403" y="535" width="1" height="1" fill="#50f050"/><rect x="403" y="536" width="1" height="1" fill="#50f050"/><rect x="402" y="537" width="1" height="1" fill="#50f050"/><rect x="402" y="538" width="1" height="1" fill="#50f050"/><rect x="402" y="539" width="1" height="1" fill="#50f050"/><rect x="402" y="540" width="1" height="1" fill="#50f050"/><rect x="401" y="541" width="1" height="1" fill="#50f050"/><rect x="401" y="542" width="1" height="1" fill="#50f050"/><rect x="401" y="543" width="1" height="1" fill="#50f050"/><rect x="401" y="544" width="1" height="1" fill="#50f050"/><rect x="402" y="545" width="1" height="1" fill="#50f050"/><rect x="402" y="546" width="1" height="1" fill="#50f050"/><rect x="402" y="547" width="1" height="1" fill="#50f050"/><rect x="402" y="548" width="1" height="1" fill="#50f050"/><rect x="403" y="549" width="1" height="1" fill="#50f050"/><rect x="403" y="550" width="1" height="1" fill="#50f050"/><rect x="719" y="535" width="245" height="1" fill="#50f050"/><rect x="719" y="550" width="245" height="1" fill="#50f050"/><rect x="719" y="535" width="1" height="1" fill="#50f050"/><rect x="719" y="536" width="1" height="1" fill="#50f050"/><rect x="718" y="537" width="1" height="1" fill="#50f050"/><rect x="718" y="538" width="1" height="1" fill="#50f050"/><rect x="718" y="539" width="1" height="1" fill="#50f050"/><rect x="718" y="540" width="1" height="1" fill="#50f050"/><rect x="717" y="541" width="1" height="1" fill="#50f050"/><rect x="717" y="542" width="1" height="1" fill="#50f050"/><rect x="717" y="543" width="1" height="1" fill="#50f050"/><rect x="717" y="544" width="1" height="1" fill="#50f050"/><rect x="718" y="545" width="1" height="1" fill="#50f050"/><rect x="718" y="546" width="1" height="1" fill="#50f050"/><rect x="718" y="547" width="1" height="1" fill="#50f050"/><rect x="718" y="548" width="1" height="1" fill="#50f050"/><rect x="719" y="549" width="1" height="1" fill="#50f050"/><rect x="719" y="550" width="1" height="1" fill="#50f050"/><rect x="180" y="559" width="35" height="14" fill="#003000"/><rect x="375" y="559" width="156" height="14" fill="#003000"/><rect x="691" y="559" width="273" height="14" fill="#003000"/><rect x="180" y="558" width="36" height="1" fill="#50f050"/><rect x="215" y="558" width="1" height="16" fill="#50f050"/><rect x="215" y="573" width="159" height="1" fill="#50f050"/><rect x="373" y="558" width="1" height="16" fill="#50f050"/><rect x="373" y="558" width="159" height="1" fill="#50f050"/><rect x="531" y="558" width="1" height="16" fill="#50f050"/><rect x="531" y="573" width="159" height="1" fill="#50f050"/><rect x="689" y="558" width="1" height="16" fill="#50f050"/><rect x="689" y="558" width="275" height="1" fill="#50f050"/><rect x="717" y="582" width="247" height="14" fill="#003000"/><rect x="180" y="596" width="536" height="1" fill="#50f050"/><rect x="715" y="581" width="1" height="16" fill="#50f050"/><rect x="715" y="581" width="249" height="1" fill="#50f050"/><rect x="180" y="605" width="592" height="14" fill="#003000"/><rect x="180" y="604" width="593" height="1" fill="#50f050"/><rect x="772" y="604" width="1" height="16" fill="#50f050"/><rect x="772" y="619" width="192" height="1" fill="#50f050"/><rect x="180" y="627" width="784" height="1" fill="#50f050"/><rect x="180" y="642" width="784" height="1" fill="#50f050"/><rect x="180" y="651" width="784" height="14" fill="#003000"/><rect x="180" y="650" width="784" height="1" fill="#50f050"/><text x="219" y="225" text-anchor="middle">0004</text><text x="535.5" y="225" text-anchor="middle">0005</text><text x="851" y="225" text-anchor="middle">0006</text><text x="370.5" y="248" text-anchor="middle">C1</text><text x="844.5" y="248" text-anchor="middle">00</text><text x="212.5" y="271" text-anchor="middle">7F</text><text x="529.5" y="271" text-anchor="middle">7C</text><text x="212.5" y="294" text-anchor="middle">C17F</text><text x="529.5" y="294" text-anchor="middle">C17C</text><text x="844.5" y="294" text-anchor="middle">0001</text><text x="213" y="317" text-anchor="middle">ctrl &#36;7f</text><text x="529.5" y="317" text-anchor="middle">ctrl &#36;7c</text><text x="845" y="317" text-anchor="middle">ld &#36;01</text><text x="245" y="340" text-anchor="middle">ZZ</text><text x="535.5" y="340" text-anchor="middle">80</text><text x="719" y="340" text-anchor="middle">83</text><text x="911" y="340" text-anchor="middle">01</text><text x="242" y="547" text-anchor="middle">007F</text><text x="559" y="547" text-anchor="middle">007C</text>
<rect x="754" y="102" width="1" height="567" fill="#ffff00"/>
<rect x="754" y="88" width="44" height="14" fill="#fff"/>
<rect x="755" y="89" width="42" height="12" fill="#ffff00"/>
<text x="756" y="99" style="fill:#000" text-anchor="start">1,845ns</text>
</g>
</svg>
</body></html>
